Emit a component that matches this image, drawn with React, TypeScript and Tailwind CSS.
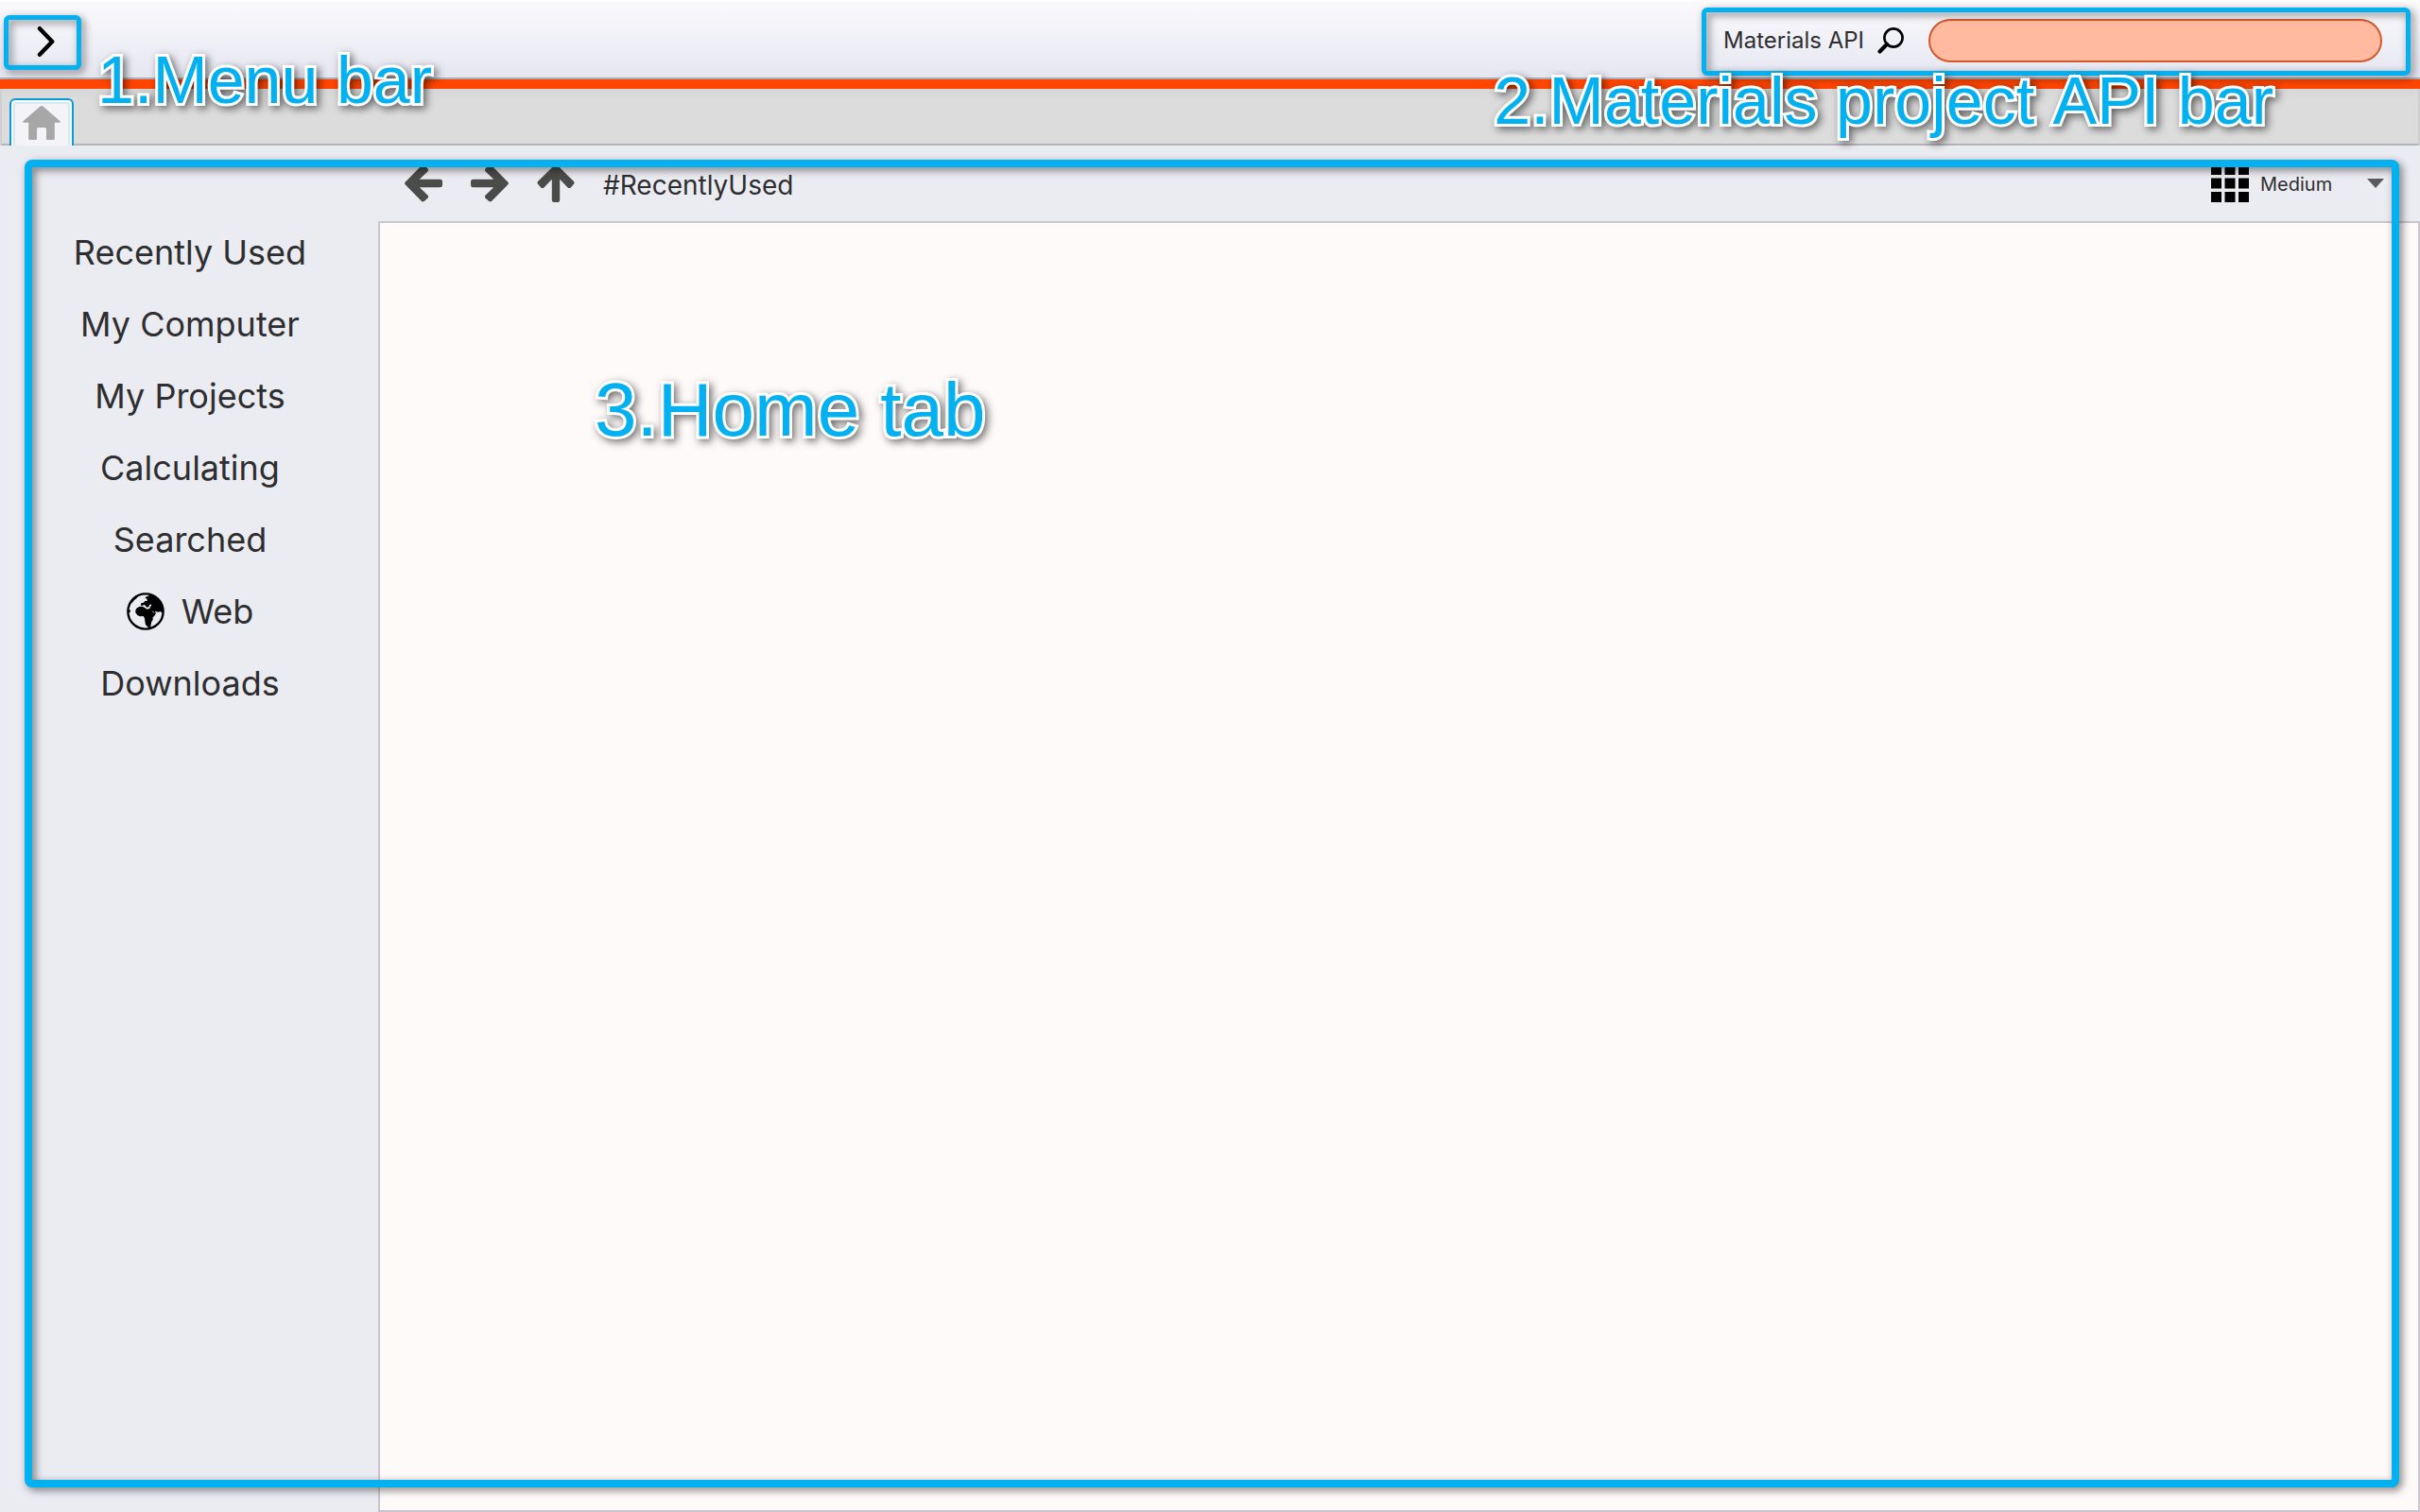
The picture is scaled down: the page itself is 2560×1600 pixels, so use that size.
import type { ReactNode } from "react";

const PLACES = [
  "Recently Used",
  "My Computer",
  "My Projects",
  "Calculating",
  "Searched",
  "Web",
  "Downloads",
];

function ChevronIcon() {
  return (
    <svg viewBox="0 0 20 34" className="h-[34px] w-5" fill="none" stroke="#000" strokeWidth="4.4" strokeLinecap="round" strokeLinejoin="round" aria-hidden="true">
      <path d="M3 3.2 16.2 17 3 30.8" />
    </svg>
  );
}

function SearchIcon() {
  return (
    <svg viewBox="0 0 28 28" className="size-7" fill="none" stroke="#000" strokeLinecap="round" aria-hidden="true">
      <circle cx="17" cy="11" r="9.6" strokeWidth="2.6" />
      <path d="M10.5 17.5 8.5 19.5" strokeWidth="3.2" />
      <path d="M8.4 19.6 2.6 25.4" strokeWidth="4.2" />
    </svg>
  );
}

function HomeIcon() {
  return (
    <svg viewBox="0 0 40 36" className="h-9 w-10" fill="#a7a7a7" aria-hidden="true">
      <path d="M18.6.6Q20-.5 21.4.6L39.6 16.2Q40.4 17.5 39 17.8H33.8V35Q33.8 36 32.8 36H26Q25 36 25 35V24.5Q25 23 23.5 23H16.5Q15 23 15 24.5V35Q15 36 14 36H7.2Q6.2 36 6.2 35V17.8H1Q-.4 17.5.4 16.2Z" />
    </svg>
  );
}

function ArrowIcon({ className }: { className: string }) {
  return (
    <svg viewBox="0 0 40 40" className={className} fill="#4b4b49" aria-hidden="true">
      <path d="M.6 18.8 17.8 1.2Q19.400-.2 21 1.200L24.4 4.2Q25.8 5.8 24.4 7.4L15.8 15.8H37.5Q40 15.8 40 18V22Q40 24.2 37.5 24.2H15.8L24.4 32.6Q25.8 34.2 24.4 35.8L21 38.8Q19.4 40.2 17.8 38.8L.6 21.2Q-.4 20 .6 18.8Z" />
    </svg>
  );
}

function GridIcon() {
  return (
    <svg viewBox="0 0 40 40" className="size-10" fill="#000" aria-hidden="true">
      {[0, 14.5, 29].map((y) =>
        [0, 14.5, 29].map((x) => <rect key={`${x}-${y}`} x={x} y={y} width="11" height="11" />),
      )}
    </svg>
  );
}

function GlobeIcon() {
  return (
    <svg viewBox="0 0 120 120" className="size-10" fill="#000" aria-hidden="true">
      <circle cx="60" cy="60" r="56" fill="none" stroke="#000" strokeWidth="7" />
      <path d="M28 56Q30 48 40 45L50 44 57 48 64 53 75 50 80 58 84 64 94 64 88 74 83 79 83 87 79 92 77 101 76 112 68 110 60 102 58 91 57 82 53 75 43 76 34 72 28 64Z" />
      <path d="M64 20 58 16 72 9 86 8Q112 24 117 60L115 68 108 60 100 62 92 60 88 64 80 58 75 53 74 46 79 41 76 37 72 40 70 46 64 47 60 43 56 38 52 41 44 41 46 34 54 32 58 27 66 26Z" />
      <path d="M8 36Q16 16 36 7L32 18 24 24 18 32Z" />
      <path d="M3 52 12 56 11 62 3 66Z" />
    </svg>
  );
}

function Frame({ className }: { className: string }) {
  return (
    <div
      className={`pointer-events-none absolute border-[#03b1f0] drop-shadow-[3px_3px_4px_rgba(0,0,0,0.5)] ${className}`}
    />
  );
}

function Callout({ className, children }: { className: string; children: ReactNode }) {
  return (
    <p
      className={`pointer-events-none absolute whitespace-nowrap font-['Liberation_Sans',sans-serif] text-[#03b1f0] drop-shadow-[3px_3px_4px_rgba(0,0,0,0.55)] [-webkit-text-stroke:6px_white] [font-kerning:none] [paint-order:stroke_fill] [stroke-linejoin:round] ${className}`}
    >
      {children}
    </p>
  );
}

export default function App() {
  return (
    <div className="relative flex min-h-screen flex-col bg-[#ebecf2] font-['Inter',sans-serif] text-[#2e2e30]">
      <header className="flex h-[84px] items-center justify-between border-t-2 border-b-2 border-t-white border-b-[#adadb5] bg-linear-to-b from-[#fafafd] to-[#e6e6f1] pt-0.5 pr-10 pl-1">
        <button type="button" aria-label="Open menu" className="flex h-14 w-[82px] items-center justify-center pt-0.5 pl-2">
          <ChevronIcon />
        </button>
        <form className="flex items-center" onSubmit={(e) => e.preventDefault()}>
          <label htmlFor="materials-search" className="text-2xl">
            Materials API
          </label>
          <button type="submit" aria-label="Search" className="mx-3.5">
            <SearchIcon />
          </button>
          <input
            id="materials-search"
            type="text"
            className="ml-3 h-[46px] w-[480px] rounded-full border-2 border-[#d2592a] bg-[#ffbaa0] px-6 text-2xl outline-none"
          />
        </form>
      </header>
      <div className="h-2.5 bg-[#ff4500]" />

      <nav aria-label="Tabs" className="flex h-[60px] items-end border-x-2 border-x-[#cfcfd1] bg-linear-to-b from-[#d6d6d7] to-[#dcdcdd] to-20% pl-2 shadow-[inset_0_-2px_0_#b3b3b8]">
        <button
          type="button"
          aria-label="Home"
          className="flex h-[50px] w-[68px] rounded-t-md border-2 border-b-0 border-[#0c9bd0] bg-[#f9fbfd] px-0.5 pt-0.5"
        >
          <span className="flex h-full w-full justify-center rounded-t-sm border-2 border-b-0 border-[#d5e9f4] bg-[#f3f3f8] pt-0.5">
            <HomeIcon />
          </span>
        </button>
      </nav>

      <div className="flex flex-1">
        <aside className="w-[400px] shrink-0 pt-[75px] pl-0.5">
          <ul>
            {PLACES.map((place) => (
              <li key={place}>
                <button type="button" className="flex h-[76px] w-full items-center justify-center gap-[18px] text-4xl">
                  {place === "Web" && <GlobeIcon />}
                  {place}
                </button>
              </li>
            ))}
          </ul>
        </aside>

        <main className="flex flex-1 flex-col">
          <div className="flex h-20 items-center justify-between pr-[38px] pl-7">
            <div className="flex items-center gap-[30px]">
              <button type="button" aria-label="Back">
                <ArrowIcon className="size-10" />
              </button>
              <button type="button" aria-label="Forward">
                <ArrowIcon className="size-10 rotate-180" />
              </button>
              <button type="button" aria-label="Up">
                <ArrowIcon className="size-10 rotate-90" />
              </button>
              <span className="pt-1 text-[28px]">#RecentlyUsed</span>
            </div>
            <div className="flex items-center">
              <label htmlFor="icon-size" aria-label="Icon size">
                <GridIcon />
              </label>
              <div className="relative ml-3 pt-0.5">
                <select id="icon-size" defaultValue="Medium" className="w-[131px] appearance-none bg-transparent text-xl outline-none">
                  <option>Small</option>
                  <option>Medium</option>
                  <option>Large</option>
                </select>
                <svg viewBox="0 0 18 10" className="pointer-events-none absolute top-1/2 right-0 h-2.5 w-[18px] -translate-y-1/2" fill="#5a5a5b" aria-hidden="true">
                  <path d="M0 0H18L9 10Z" />
                </svg>
              </div>
            </div>
          </div>
          <section aria-label="Files" className="flex-1 border-2 border-[#c8c7cf] bg-[#fefaf9]" />
        </main>
      </div>

      <Frame className="top-4 left-1 h-[58px] w-[82px] rounded-md border-5" />
      <Frame className="top-2 right-2.5 h-[72px] w-[750px] rounded-md border-5" />
      <Frame className="top-[169px] right-[22px] bottom-[26px] left-[26px] rounded-lg border-8" />
      <Callout className="top-[45px] left-[103px] text-[70px] leading-[80px]">1.Menu bar</Callout>
      <Callout className="top-[67px] right-[155px] text-[70px] leading-[80px]">2.Materials project API bar</Callout>
      <Callout className="top-[389px] left-[629px] text-[80px] leading-[90px]">3.Home tab</Callout>
    </div>
  );
}
